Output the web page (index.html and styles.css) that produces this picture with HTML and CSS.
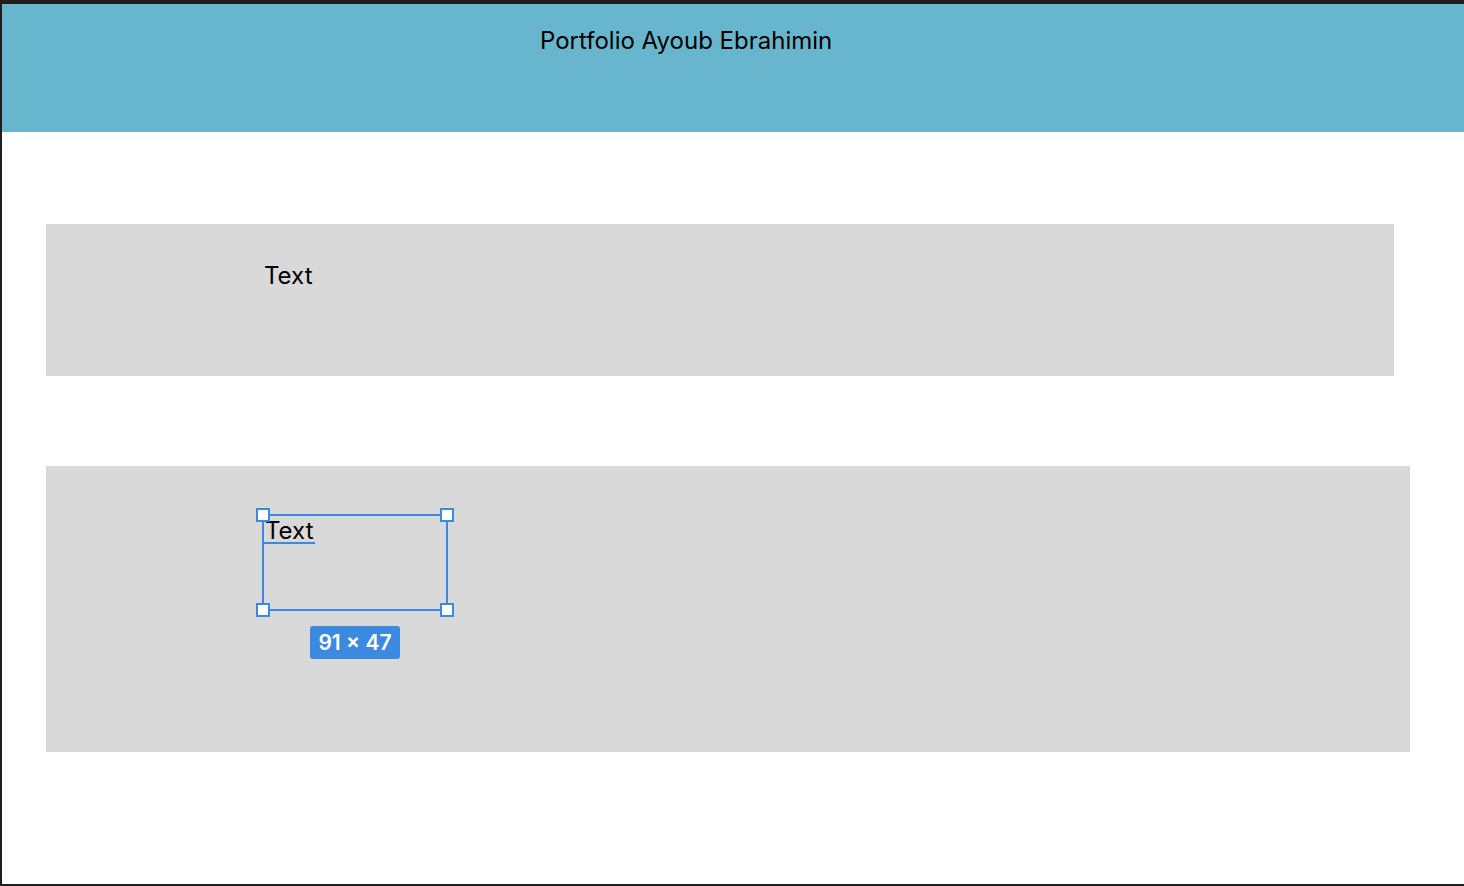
FILE: index.html
```html
<!DOCTYPE html>
<html>
<head>
<meta charset="utf-8">
<link rel="stylesheet" href="styles.css">
</head>
<body>
<div class="frame">
  <header class="header">
    <h1 class="title">Portfolio Ayoub Ebrahimin</h1>
  </header>
  <main class="content">
    <section class="card card-one">
      <p class="card-text">Text</p>
    </section>
    <section class="card card-two">
      <div class="selected">
        <span class="sel-text">Text</span>
        <span class="handle h-tl"></span>
        <span class="handle h-tr"></span>
        <span class="handle h-bl"></span>
        <span class="handle h-br"></span>
        <span class="badge">91 × 47</span>
      </div>
    </section>
  </main>
</div>
</body>
</html>
```
FILE: styles.css
```css
html, body {
  margin: 0;
  padding: 0;
  background: #1e1e1e;
  width: 1464px;
  height: 886px;
  overflow: hidden;
  font-family: Inter, "Noto Sans", sans-serif;
}
.frame {
  margin: 4px 0 0 2px;
  width: 1462px;
  height: 880px;
  background: #ffffff;
  display: flex;
  flex-direction: column;
}
.header {
  height: 128px;
  background: #67b6cd;
  display: flex;
  justify-content: flex-start;
}
.title {
  margin: 23px 0 0 538px;
  font-size: 24px;
  font-weight: 400;
  color: #000;
  line-height: 28px;
}
.content {
  display: flex;
  flex-direction: column;
  padding: 92px 0 0 44px;
  gap: 90px;
}
.card {
  background: #d9d9d9;
  position: relative;
}
.card-one {
  width: 1348px;
  height: 152px;
}
.card-two {
  width: 1364px;
  height: 286px;
}
.card-text {
  margin: 38px 0 0 218px;
  font-size: 24px;
  line-height: 28px;
  color: #000;
}
.selected {
  position: absolute;
  left: 216px;
  top: 48px;
  width: 182px;
  height: 93px;
  border: 2px solid #3b8ae0;
}
.sel-text {
  position: absolute;
  left: 1px;
  top: 1px;
  font-size: 24px;
  line-height: 28px;
  color: #000;
}
.sel-text::after {
  content: "";
  position: absolute;
  left: -2px;
  right: -1px;
  bottom: 1px;
  height: 2px;
  background: #3b8ae0;
}
.handle {
  position: absolute;
  width: 10px;
  height: 10px;
  background: #fff;
  border: 2px solid #3b8ae0;
}
.h-tl { left: -8px; top: -8px; }
.h-tr { right: -8px; top: -8px; }
.h-bl { left: -8px; bottom: -8px; }
.h-br { right: -8px; bottom: -8px; }
.badge {
  position: absolute;
  left: 46px;
  top: 110px;
  width: 90px;
  height: 33px;
  background: #3b8ae0;
  border-radius: 3px;
  color: #fff;
  font-size: 21px;
  font-weight: 600;
  line-height: 33px;
  text-align: center;
}
```
